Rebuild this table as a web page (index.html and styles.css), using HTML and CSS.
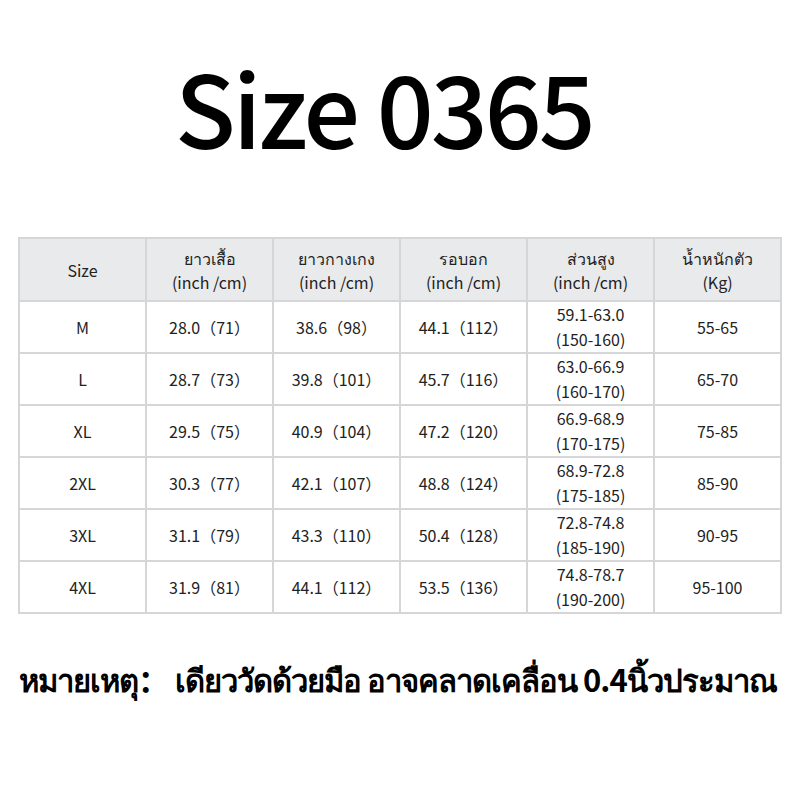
FILE: index.html
```html
<!DOCTYPE html>
<html lang="th">
<head>
<meta charset="utf-8">
<link rel="stylesheet" href="styles.css">
</head>
<body>
<div class="page">
  <h1 class="title">Size 0365</h1>
  <table class="chart">
    <colgroup><col><col><col><col><col><col></colgroup>
    <thead>
      <tr>
        <th>Size</th>
        <th>ยาวเสื้อ<br>(inch /cm)</th>
        <th>ยาวกางเกง<br>(inch /cm)</th>
        <th>รอบอก<br>(inch /cm)</th>
        <th>ส่วนสูง<br>(inch /cm)</th>
        <th>น้ำหนักตัว<br>(Kg)</th>
      </tr>
    </thead>
    <tbody>
      <tr><td>M</td><td>28.0（71）</td><td>38.6（98）</td><td>44.1（112）</td><td>59.1-63.0<br>(150-160)</td><td>55-65</td></tr>
      <tr><td>L</td><td>28.7（73）</td><td>39.8（101）</td><td>45.7（116）</td><td>63.0-66.9<br>(160-170)</td><td>65-70</td></tr>
      <tr><td>XL</td><td>29.5（75）</td><td>40.9（104）</td><td>47.2（120）</td><td>66.9-68.9<br>(170-175)</td><td>75-85</td></tr>
      <tr><td>2XL</td><td>30.3（77）</td><td>42.1（107）</td><td>48.8（124）</td><td>68.9-72.8<br>(175-185)</td><td>85-90</td></tr>
      <tr><td>3XL</td><td>31.1（79）</td><td>43.3（110）</td><td>50.4（128）</td><td>72.8-74.8<br>(185-190)</td><td>90-95</td></tr>
      <tr><td>4XL</td><td>31.9（81）</td><td>44.1（112）</td><td>53.5（136）</td><td>74.8-78.7<br>(190-200)</td><td>95-100</td></tr>
    </tbody>
  </table>
  <p class="note">หมายเหตุ<span class="colon">：</span>เดียววัดด้วยมือ อาจคลาดเคลื่อน 0.4นิ้วประมาณ</p>
</div>
</body>
</html>
```
FILE: styles.css
```css
html, body {
  margin: 0;
  padding: 0;
  background: #ffffff;
}
.page {
  width: 800px;
  height: 800px;
  padding-top: 46px;
  box-sizing: border-box;
  font-family: "Noto Sans CJK SC", "Noto Sans", sans-serif;
  color: #222;
  overflow: hidden;
}
.title {
  margin: 0 0 0 175px;
  font-size: 100px;
  font-weight: 500;
  line-height: 120px;
  color: #000;
  letter-spacing: -3px;
  white-space: nowrap;
}
.chart {
  margin: 71px 0 0 18px;
  border-collapse: collapse;
  table-layout: fixed;
  width: 764px;
}
.chart col {
  width: 127px;
}
.chart th, .chart td {
  border: 2px solid #d6d6d8;
  text-align: center;
  vertical-align: middle;
  padding: 0;
  font-size: 16px;
  font-weight: 400;
  line-height: 25px;
  color: #222;
}
.chart th {
  background: #e9eaec;
  height: 61px;
  line-height: 24px;
}
.chart td {
  height: 50px;
}
.note {
  margin: 45px 0 0 19px;
  font-family: "Noto Sans CJK SC", sans-serif;
  font-size: 31px;
  line-height: 40px;
  font-weight: 700;
  letter-spacing: -1px;
  color: #000;
  white-space: nowrap;
}
.colon {
  margin-right: 7px;
}
```
